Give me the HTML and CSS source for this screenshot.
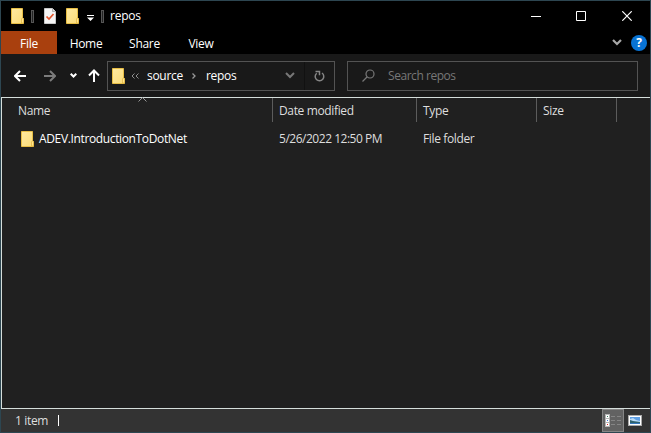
FILE: index.html
```html
<!DOCTYPE html>
<html lang="en">
<head>
<meta charset="utf-8">
<title>repos</title>
<link rel="stylesheet" href="styles.css">
</head>
<body>
<svg class="defs" width="0" height="0" aria-hidden="true">
  <defs>
    <linearGradient id="paper" x2="1" y2="1"><stop stop-color="#ffe9a0"/><stop offset="1" stop-color="#fbdc78"/></linearGradient>
    <symbol id="folder" viewBox="0 0 13 16">
      <path d="M.5.5h11v9l1 1v5H.5z" fill="url(#paper)" stroke="#e8be45"/>
      <path d="M10.5 15v-4l1-1.500 1 1.500v4z" fill="#ffe58f" stroke="#dfb33d" stroke-width=".7"/>
    </symbol>
  </defs>
</svg>
<div class="window">
  <header class="titlebar">
    <svg class="folder app-icon"><use href="#folder"/></svg>
    <i class="grip grip-first"></i>
    <svg class="properties" width="12" height="16" viewBox="0 0 12 16"><path d="M.5.5h8l3 3v12H.5z" fill="#f5f5f5" stroke="#c8c8c8"/><path d="M8.500.5v3h3" fill="#ddd" stroke="#999" stroke-width=".7"/><path d="M2.500 8.500l2.500 2.500 4.500-5" fill="none" stroke="#e4572e" stroke-width="1.700"/></svg>
    <svg class="folder new-folder"><use href="#folder"/></svg>
    <svg class="customize" width="7" height="6" viewBox="0 0 7 6"><path d="M0 0h7v1H0zM0 2.500h7L3.500 6z" fill="#fff"/></svg>
    <i class="grip"></i>
    <span class="title">repos</span>
    <div class="controls">
      <svg width="10" height="10" viewBox="0 0 10 10"><path d="M0 5.500h10"/></svg>
      <svg width="10" height="10" viewBox="0 0 10 10"><path d="M.5.5h9v9h-9z"/></svg>
      <svg width="10" height="10" viewBox="0 0 10 10"><path d="M.3.3l9.400 9.400M9.700.3L.3 9.700" stroke-width="1.200"/></svg>
    </div>
  </header>
  <nav class="ribbon">
    <span class="tab file">File</span><span class="tab home">Home</span><span class="tab share">Share</span><span class="tab view">View</span>
    <svg class="expand" width="10" height="7" viewBox="0 0 10 7"><path d="M1 1l4 4 4-4" fill="none" stroke="#a8a8a8" stroke-width="2.200"/></svg>
    <span class="help">?</span>
  </nav>
  <div class="toolbar">
    <svg class="back" width="12" height="12" viewBox="0 0 12 12"><path d="M12 6H1.500M6 1L1 6l5 5"/></svg>
    <svg class="forward" width="12" height="12" viewBox="0 0 12 12"><path d="M0 6h10.500M6 1l5 5-5 5"/></svg>
    <svg class="recent" width="7" height="5" viewBox="0 0 7 5"><path d="M.7.7l2.800 2.800L6.300.7"/></svg>
    <svg class="up" width="12" height="13" viewBox="0 0 12 13"><path d="M6 13V1.500M1 6.500l5-5 5 5"/></svg>
    <div class="address">
      <svg class="folder"><use href="#folder"/></svg>
      <svg class="overflow" width="8" height="6" viewBox="0 0 8 6"><path d="M3.500.5L1 3l2.500 2.500M7.500.5L5 3l2.500 2.500"/></svg>
      <span class="crumb source">source</span>
      <svg class="separator" width="4" height="6" viewBox="0 0 4 6"><path d="M.5.5L3 3 .5 5.500"/></svg>
      <span class="crumb">repos</span>
      <svg class="history" width="10" height="7" viewBox="0 0 10 7"><path d="M1 1l4 4 4-4"/></svg>
      <div class="reload"><svg width="11" height="12" viewBox="0 0 11 12"><path d="M2.700 3.200A4.300 4.300 0 1 0 8 3M5.500 5.200V1.500H1.500"/></svg></div>
    </div>
    <div class="search">
      <svg width="13" height="13" viewBox="0 0 13 13"><circle cx="8" cy="5" r="4"/><path d="M5 8L.5 12.500"/></svg>
      <span>Search repos</span>
    </div>
  </div>
  <main class="files">
    <svg class="sort" width="9" height="5" viewBox="0 0 9 5"><path d="M.5 4.500l4-4 4 4" fill="none" stroke="#969696"/></svg>
    <div class="row head">
      <span class="name">Name</span><span class="date">Date modified</span><span class="type">Type</span><span class="size">Size</span>
    </div>
    <div class="row item">
      <span class="name"><svg class="folder"><use href="#folder"/></svg><b>ADEV.IntroductionToDotNet</b></span><span class="date stamp">5/26/2022 12:50 PM</span><span class="type">File folder</span>
    </div>
  </main>
  <footer class="status">
    <span class="count">1 item</span><i class="bar"></i>
    <div class="mode selected"><svg width="16" height="13" viewBox="0 0 16 13"><path d="M0 0h5v13H0z" fill="#b5b5b5"/><path d="M1 1h3v3H1zM1 5h3v3H1zM1 9h3v3H1z" fill="#fff"/><path d="M2 2h1v1H2z" fill="#347b5c"/><path d="M2 6h1v1H2z" fill="#3d78e0"/><path d="M2 10h1v1H2z" fill="#d22"/><path d="M6 2.500h4m2 0h4M6 6.500h4m2 0h4M6 10.500h4m2 0h4" stroke="#858585"/></svg></div>
    <div class="mode"><svg width="14" height="11" viewBox="0 0 14 11"><path d="M0 0h14v11H0z" fill="#aaa"/><path d="M1 1h12v9H1z" fill="#fff"/><path d="M2 2h10v7H2z" fill="#5f9fe4"/><path d="M2 4l3-1 3 2 4 1v1H2z" fill="#b9dcf8"/><path d="M2 5l3 1 7 1v2H2z" fill="#2e6370"/><path d="M2 8h10v1H2z" fill="#3779bd"/></svg></div>
  </footer>
</div>
</body>
</html>
```

FILE: styles.css
```css
* { box-sizing: border-box; }
body { margin: 0; background: #000; font: 12px/16px "Open Sans", "Noto Sans", sans-serif; color: #fff; }
svg { display: block; flex: none; }
.defs { position: absolute; }
.window { width: 651px; height: 433px; border: 1px solid #2d4651; display: flex; flex-direction: column; background: #191919; white-space: nowrap; }
.folder { width: 13px; height: 16px; }

.titlebar { height: 30px; background: #000; display: flex; align-items: center; padding-left: 10px; }
.grip { width: 3px; height: 13px; border: 1px solid #555; background: #222; }
.grip-first { margin-left: 7px; }
.properties { margin-left: 10px; }
.new-folder { margin-left: 10px; }
.customize { margin: 3px 7px 0 8px; }
.grip:not(.grip-first) { margin-left: 0; margin-right: 0; position: relative; }
.title { margin-left: 6px; letter-spacing: -.25px; }
.controls { margin-left: auto; display: flex; gap: 35px; padding-right: 18px; }
.controls svg { fill: none; stroke: #fff; }
.controls svg:nth-child(2) { margin-right: 1px; }

.ribbon { height: 23px; background: #000; display: flex; align-items: center; letter-spacing: -.3px; }
.tab { height: 23px; line-height: 25px; text-align: center; }
.file { width: 56px; background: #a9400e; }
.home { width: 58px; }
.share { width: 59px; }
.view { width: 54px; }
.expand { margin-left: auto; }
.help { width: 16px; height: 16px; margin: 0 3px 0 9px; border-radius: 50%; background: #0873d4; font-weight: 700; font-size: 12px; line-height: 16px; text-align: center; }

.toolbar { height: 43px; display: flex; align-items: center; padding-left: 13px; }
.toolbar svg { fill: none; stroke: #fff; stroke-width: 2; }
.toolbar .folder { stroke: none; stroke-width: 1; }
.toolbar .forward { margin-left: 18px; stroke: #7c7c7c; }
.recent { margin-left: 14px; }
.up { margin-left: 11px; }
.address { width: 228px; height: 30px; margin-left: 7px; border: 1px solid #535353; display: flex; align-items: center; padding-left: 4px; }
.toolbar .overflow { margin-left: 6px; stroke: #8e8e8e; stroke-width: 1; }
.crumb { letter-spacing: -.3px; }
.source { margin-left: 8px; }
.toolbar .separator { margin: 0 10px 0 9px; stroke: #999; stroke-width: 1.300; }
.toolbar .history { margin-left: auto; stroke: #777; }
.reload { width: 30px; height: 28px; margin-left: 9px; border-left: 1px solid #111; display: flex; align-items: center; justify-content: center; }
.toolbar .reload svg { stroke: #858585; stroke-width: 1.500; }
.search { width: 291px; height: 30px; margin-left: 12px; border: 1px solid #535353; display: flex; align-items: center; padding-left: 14px; color: #777; letter-spacing: -.5px; }
.toolbar .search svg { stroke: #777; stroke-width: 1.200; }
.search span { margin-left: 13px; letter-spacing: -.45px; }

.files { position: relative; height: 312px; border: 1px solid #d5dedb; border-right: 0; background: #202020; }
.sort { position: absolute; left: 136px; top: -1px; }
.row { display: flex; align-items: center; letter-spacing: -.36px; color: #dedede; }
.row > span { display: flex; align-items: center; height: 24px; padding-left: 6px; padding-top: 1px; }
.row .name { width: 271px; padding-left: 16px; }
.date { width: 144px; }
.stamp { letter-spacing: -.48px; }
.type { width: 120px; }
.size { width: 80px; }
.head > span { border-right: 1px solid #5c5c5c; }
.item { margin-top: 4px; }
.item .name { padding-left: 19px; }
.item b { margin-left: 5px; font-weight: 400; color: #fff; }

.status { height: 23px; background: #333; display: flex; align-items: center; padding-left: 14px; color: #dedede; letter-spacing: -.35px; }
.bar { width: 1px; height: 11px; margin: 0 auto 0 10px; background: #fff; }
.mode { width: 22px; height: 23px; display: flex; align-items: center; justify-content: center; }
.mode + .mode { margin: 0 4px 0 0; }
.selected { background: #626262; border: 1px solid #858585; }
```
